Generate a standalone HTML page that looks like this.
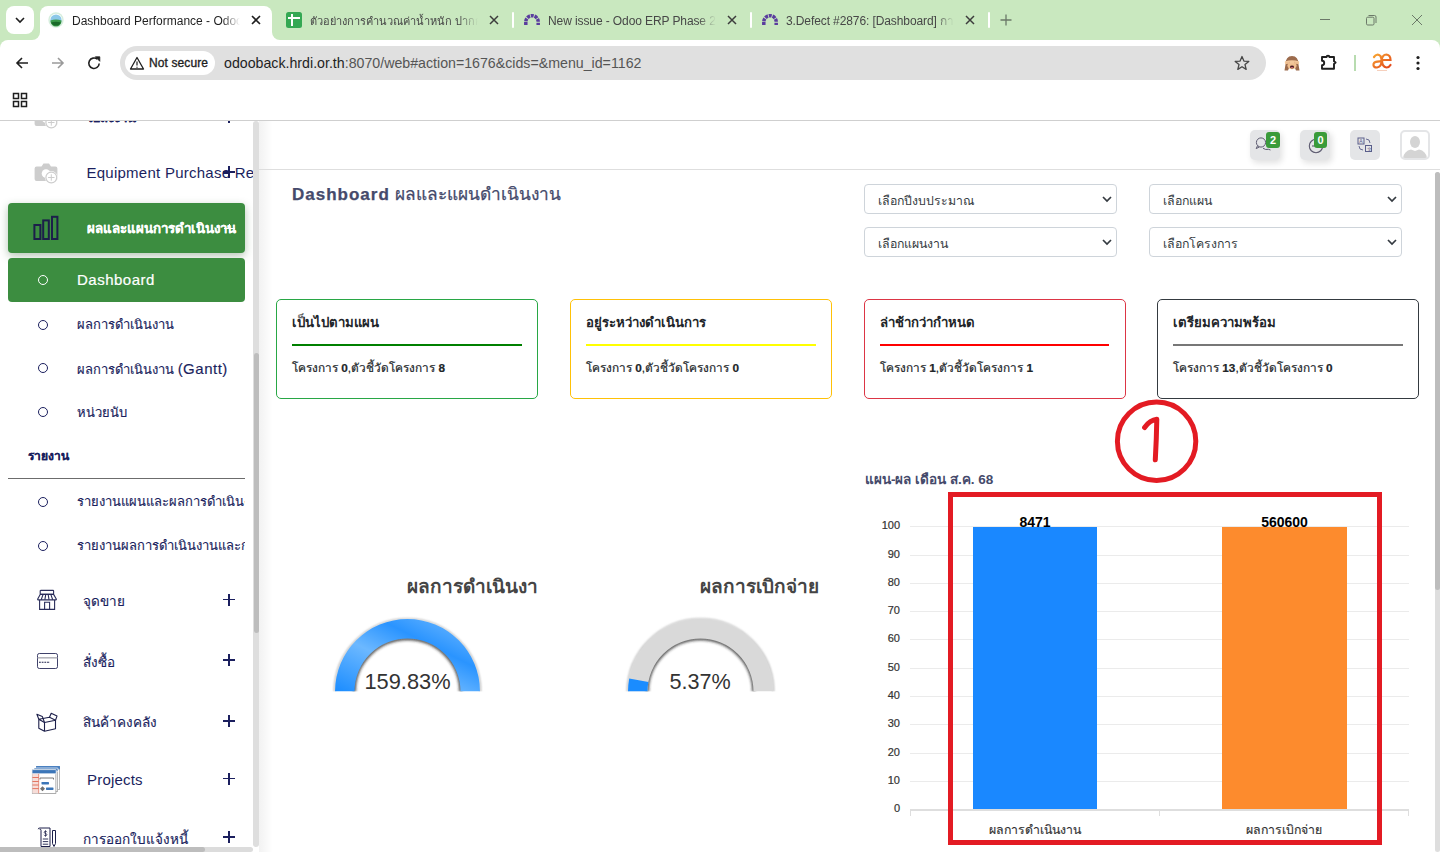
<!DOCTYPE html>
<html><head><meta charset="utf-8">
<style>
*{box-sizing:border-box;margin:0;padding:0}
html,body{width:1440px;height:852px;overflow:hidden;background:#fff;font-family:"Liberation Sans",sans-serif;position:relative}
.a{position:absolute}
.tt{white-space:nowrap}
/* chrome */
#tabs{left:0;top:0;width:1440px;height:50px;background:#c9e8bf}
#toolbar{left:0;top:40px;width:1440px;height:44px;background:#fff;border-radius:8px 8px 0 0}
#bm{left:0;top:84px;width:1440px;height:36px;background:#fff}
#topline{left:0;top:120px;width:1440px;height:1px;background:#cfcfcf}
.tabtitle{white-space:nowrap;font-size:12px;color:#474747;top:13px;height:16px;line-height:16px;overflow:hidden}
.sep{width:2px;height:16px;top:12px;background:#fff;border-radius:1px}
/* sidebar */
.sb-txt{color:#1b1f5e;font-size:15px;white-space:nowrap;-webkit-text-stroke:0.15px #1b1f5e}
.circ{width:10px;height:10px;border:1.3px solid #1b1f5e;border-radius:50%;left:38px}
.plus{left:223px;width:12px;height:12px}
.plus:before{content:"";position:absolute;left:0;top:5.45px;width:12px;height:1.1px;background:#1b1f5e}
.plus:after{content:"";position:absolute;left:5.45px;top:0;width:1.1px;height:12px;background:#1b1f5e}
/* cards */
.card{top:299px;height:100px;width:261.5px;border:1px solid;border-radius:5px}
.card .t{position:absolute;left:15px;top:12px;font-size:13.2px;font-weight:bold;color:#212529;white-space:nowrap}
.card .l{position:absolute;left:15px;top:44px;height:2px}
.card .b{position:absolute;left:15px;top:58px;font-size:11.8px;color:#212529;white-space:nowrap;-webkit-text-stroke:0.2px #212529}
.card .b b{font-weight:bold}
.sel{height:30px;width:253px;border:1px solid #ced4da;border-radius:4px;background:#fff}
.sel span{position:absolute;left:13px;top:6px;font-size:12.3px;color:#343a40;white-space:nowrap}
.sel svg{position:absolute;right:3px;top:8px}
.ylab{font-size:11px;color:#333;text-align:right;width:30px;left:870px;-webkit-text-stroke:0.2px #333}
.grid{left:910px;width:499px;height:1px;background:#ebebeb}
</style></head><body>

<!-- ===== TAB STRIP ===== -->
<div id="tabs" class="a"></div>
<!-- active tab -->
<div class="a" style="left:40px;top:6px;width:232px;height:40px;background:#fff;border-radius:8px 8px 0 0"></div>
<div class="a" style="left:32px;top:30px;width:8px;height:10px;background:#fff"></div>
<div class="a" style="left:24px;top:22px;width:16px;height:18px;background:#c9e8bf;border-radius:0 0 8px 0"></div>
<div class="a" style="left:6px;top:6px;width:28px;height:28px;background:#fff;border-radius:8px"></div>
<svg class="a" style="left:13px;top:13px" width="14" height="14" viewBox="0 0 14 14"><path d="M3 5 L7 9 L11 5" fill="none" stroke="#1f1f1f" stroke-width="1.6"/></svg>

<div class="a" style="left:272px;top:30px;width:10px;height:10px;background:#fff"></div>
<div class="a" style="left:272px;top:22px;width:18px;height:18px;background:#c9e8bf;border-radius:0 0 0 8px"></div>
<svg class="a" style="left:48px;top:12px" width="16" height="16" viewBox="0 0 16 16"><circle cx="8" cy="8" r="7.7" fill="#d6eedd"/><circle cx="8" cy="8" r="6.2" fill="#fff"/><circle cx="8" cy="8" r="5.6" fill="#8cc8e8"/><path d="M2.4 8.6 Q8 6.2 13.6 8.6 L13.6 9 A5.6 5.6 0 0 1 2.4 9Z" fill="#3a9a4a"/><path d="M3 10.5 Q8 9 13 10.5 A5.6 5.6 0 0 1 3 10.5Z" fill="#1a6a2a"/></svg>
<div class="a tabtitle" style="left:72px;width:170px;color:#1f1f1f;-webkit-mask-image:linear-gradient(to right,#000 150px,transparent 168px)">Dashboard Performance - Odoo</div>
<svg class="a" style="left:251px;top:15px" width="10" height="10" viewBox="0 0 10 10"><path d="M1 1L9 9M9 1L1 9" stroke="#1f1f1f" stroke-width="1.6"/></svg>
<!-- tab 2 -->
<div class="a" style="left:286px;top:12px;width:16px;height:16px;background:#34a853;border-radius:2.5px"></div>
<div class="a" style="left:288px;top:17px;width:12px;height:2px;background:#fff"></div>
<div class="a" style="left:291px;top:14px;width:2px;height:12px;background:#fff"></div>
<div class="a tabtitle" style="left:310px;width:168px;font-size:11px;-webkit-mask-image:linear-gradient(to right,#000 150px,transparent 168px)">ตัวอย่างการคำนวณค่าน้ำหนัก ปากกล้า</div>
<svg class="a" style="left:489px;top:15px" width="10" height="10" viewBox="0 0 10 10"><path d="M1 1L9 9M9 1L1 9" stroke="#3c3c3c" stroke-width="1.5"/></svg>
<div class="a sep" style="left:512px"></div>
<!-- tab 3 -->
<svg class="a" style="left:522px;top:12px" width="20" height="16" viewBox="0 0 20 16"><path d="M3.8 13.1V9.9A6.2 6.2 0 0 1 16.2 9.9V13.1" fill="none" stroke="#5a3d9e" stroke-width="3.5" stroke-dasharray="3 0.82"/></svg>
<div class="a tabtitle" style="left:548px;width:168px;letter-spacing:-0.1px;-webkit-mask-image:linear-gradient(to right,#000 150px,transparent 168px)">New issue - Odoo ERP Phase 2</div>
<svg class="a" style="left:727px;top:15px" width="10" height="10" viewBox="0 0 10 10"><path d="M1 1L9 9M9 1L1 9" stroke="#3c3c3c" stroke-width="1.5"/></svg>
<div class="a sep" style="left:750px"></div>
<!-- tab 4 -->
<svg class="a" style="left:760px;top:12px" width="20" height="16" viewBox="0 0 20 16"><path d="M3.8 13.1V9.9A6.2 6.2 0 0 1 16.2 9.9V13.1" fill="none" stroke="#5a3d9e" stroke-width="3.5" stroke-dasharray="3 0.82"/></svg>
<div class="a tabtitle" style="left:786px;width:168px;letter-spacing:-0.1px;-webkit-mask-image:linear-gradient(to right,#000 150px,transparent 168px)">3.Defect #2876: [Dashboard] กา</div>
<svg class="a" style="left:965px;top:15px" width="10" height="10" viewBox="0 0 10 10"><path d="M1 1L9 9M9 1L1 9" stroke="#3c3c3c" stroke-width="1.5"/></svg>
<div class="a sep" style="left:988px"></div>
<svg class="a" style="left:999px;top:13px" width="14" height="14" viewBox="0 0 14 14"><path d="M7 1.5V12.5M1.5 7H12.5" stroke="#6b7868" stroke-width="1.3"/></svg>
<!-- window controls -->
<div class="a" style="left:1320px;top:19px;width:10px;height:1px;background:#6b7868"></div>
<svg class="a" style="left:1364px;top:13px" width="14" height="14" viewBox="0 0 14 14"><rect x="2.5" y="4.2" width="7.5" height="7.8" rx="1.2" fill="none" stroke="#6b7868" stroke-width="1"/><path d="M4.5 2.5H10.5A1.5 1.5 0 0 1 12 4V10" fill="none" stroke="#6b7868" stroke-width="1"/></svg>
<svg class="a" style="left:1411px;top:14px" width="12" height="12" viewBox="0 0 12 12"><path d="M1 1L11 11M11 1L1 11" stroke="#6b7868" stroke-width="1"/></svg>

<!-- ===== TOOLBAR ===== -->
<div id="toolbar" class="a"></div>
<svg class="a" style="left:14px;top:55px" width="16" height="16" viewBox="0 0 16 16"><path d="M14 8H3M8 3L3 8L8 13" fill="none" stroke="#1f1f1f" stroke-width="1.6"/></svg>
<svg class="a" style="left:50px;top:55px" width="16" height="16" viewBox="0 0 16 16"><path d="M2 8H13M8 3L13 8L8 13" fill="none" stroke="#9a9a9a" stroke-width="1.6"/></svg>
<svg class="a" style="left:86px;top:55px" width="16" height="16" viewBox="0 0 16 16"><path d="M13.2 8.5A5.2 5.2 0 1 1 11.3 4.2" fill="none" stroke="#1f1f1f" stroke-width="1.6"/><path d="M9.3 1.8H13.8V6.3Z" fill="#1f1f1f" stroke="#1f1f1f" stroke-width="0.8" stroke-linejoin="round"/></svg>
<div class="a" style="left:120px;top:46px;width:1146px;height:34px;background:#e0e0e0;border-radius:17px"></div>
<div class="a" style="left:125px;top:51px;width:90px;height:24px;background:#fff;border-radius:12px"></div>
<svg class="a" style="left:129px;top:56px" width="16" height="14" viewBox="0 0 16 14"><path d="M8 1.5L14.5 13H1.5Z" fill="none" stroke="#1f1f1f" stroke-width="1.3" stroke-linejoin="round"/><path d="M8 5.5V9.5M8 10.8V11.8" stroke="#1f1f1f" stroke-width="1.2"/></svg>
<div class="a tt" style="left:149px;top:56px;font-size:12px;color:#1f1f1f;-webkit-text-stroke:0.35px #1f1f1f;letter-spacing:0.1px">Not secure</div>
<div class="a tt" style="left:224px;top:55px;font-size:14.2px;color:#1f1f1f">odooback.hrdi.or.th<span style="color:#555">:8070/web#action=1676&amp;cids=&amp;menu_id=1162</span></div>
<svg class="a" style="left:1234px;top:55px" width="16" height="16" viewBox="0 0 16 16"><path d="M8 1.5L9.9 6.1L14.8 6.4L11 9.6L12.2 14.4L8 11.7L3.8 14.4L5 9.6L1.2 6.4L6.1 6.1Z" fill="none" stroke="#474747" stroke-width="1.3" stroke-linejoin="round"/></svg>
<svg class="a" style="left:1284px;top:55px" width="16" height="16" viewBox="0 0 16 16"><path d="M1.5 9.5Q1.5 1 8 1Q14.5 1 14.5 9.5L15.5 15.5H12L11 13H5L4 15.5H0.5Z" fill="#9c6b4c"/><ellipse cx="8" cy="10.6" rx="4.6" ry="3.6" fill="#f0c090"/><path d="M0.8 6.5Q8 4.2 15.2 6.5L15 9.3Q8 7.8 1 9.3Z" fill="#f3c89c"/><path d="M3 7.2V8.8M5.2 6.7V8.4M10.8 6.7V8.4M13 7.2V8.8" stroke="#d9a070" stroke-width="0.6"/><ellipse cx="8" cy="12" rx="2" ry="1.4" fill="#4a1a24"/><ellipse cx="8" cy="12.5" rx="1.1" ry="0.6" fill="#e07080"/></svg>
<svg class="a" style="left:1319px;top:52px" width="20" height="20" viewBox="0 0 20 20"><path d="M3 5H7.6A1.4 1.4 0 0 1 10.4 5H15V9.3L16.6 10.6L15 11.9V16.8H3V13.2A2.2 2.2 0 0 0 3 8.8Z" fill="none" stroke="#1f1f1f" stroke-width="1.9" stroke-linejoin="round"/></svg>
<div class="a" style="left:1354px;top:55px;width:2px;height:16px;background:#b8dcb0"></div>
<svg class="a" style="left:1371px;top:52px" width="22" height="20" viewBox="0 0 22 20"><defs><linearGradient id="ae" x1="0" y1="0" x2="1" y2="1"><stop offset="0" stop-color="#f7a531"/><stop offset="1" stop-color="#e2441a"/></linearGradient></defs><path d="M3 5Q6 1 9.5 4Q11 7 10.5 10Q10 15 6 15.5Q2 15.5 2.5 12Q3.5 9 10.5 9.5M10.5 9.5Q11 2.5 15.5 2.5Q19.5 3 19.5 8H11M11 8Q11 15 15.5 15.5Q18 15.5 19.5 13" fill="none" stroke="url(#ae)" stroke-width="2.2" stroke-linecap="round"/><path d="M6 18.5H16" stroke="#f0b090" stroke-width="0.6"/></svg>
<svg class="a" style="left:1414px;top:55px" width="8" height="16" viewBox="0 0 8 16"><circle cx="4" cy="2.5" r="1.6" fill="#1f1f1f"/><circle cx="4" cy="8" r="1.6" fill="#1f1f1f"/><circle cx="4" cy="13.5" r="1.6" fill="#1f1f1f"/></svg>

<!-- ===== BOOKMARK BAR ===== -->
<div id="bm" class="a"></div>
<svg class="a" style="left:12px;top:92px" width="16" height="16" viewBox="0 0 16 16"><rect x="1.5" y="1.5" width="5" height="5" fill="none" stroke="#1f1f1f" stroke-width="1.5"/><rect x="9.5" y="1.5" width="5" height="5" fill="none" stroke="#1f1f1f" stroke-width="1.5"/><rect x="1.5" y="9.5" width="5" height="5" fill="none" stroke="#1f1f1f" stroke-width="1.5"/><rect x="9.5" y="9.5" width="5" height="5" fill="none" stroke="#1f1f1f" stroke-width="1.5"/></svg>
<div id="topline" class="a"></div>

<!-- ===== SIDEBAR ===== -->
<div id="sidebar" class="a" style="left:0;top:121px;width:253px;height:731px;overflow:hidden;background:#fff">
<div style="position:absolute;left:0;top:-121px;width:253px;height:852px">
<!-- cut item -->
<svg class="a" style="left:34px;top:107px" width="26" height="24" viewBox="0 0 26 24"><path d="M2.6 4.5H7.5L9.5 1.6H15L17 4.5H21.4A2 2 0 0 1 23.4 6.5V16.9A2 2 0 0 1 21.4 18.9H2.6A2 2 0 0 1 0.6 16.9V6.5A2 2 0 0 1 2.6 4.5Z" fill="#cdcdcd"/><circle cx="12" cy="11.5" r="4.3" fill="#fff"/><circle cx="17.3" cy="15.5" r="6.4" fill="#fff"/><circle cx="17.3" cy="15.5" r="5.4" fill="none" stroke="#cdcdcd" stroke-width="1.2"/><path d="M17.3 12.3V18.7M14.1 15.5H20.5" stroke="#cdcdcd" stroke-width="1"/></svg>
<div class="a sb-txt" style="left:86px;top:107.5px;font-size:13.3px;line-height:20px;font-weight:bold">ใบสั่งงาน</div>
<div class="a plus" style="top:110.5px"></div>
<!-- Equipment -->
<svg class="a" style="left:34px;top:162px" width="26" height="24" viewBox="0 0 26 24"><path d="M2.6 4.5H7.5L9.5 1.6H15L17 4.5H21.4A2 2 0 0 1 23.4 6.5V16.9A2 2 0 0 1 21.4 18.9H2.6A2 2 0 0 1 0.6 16.9V6.5A2 2 0 0 1 2.6 4.5Z" fill="#cdcdcd"/><circle cx="12" cy="11.5" r="4.3" fill="#fff"/><circle cx="17.3" cy="15.5" r="6.4" fill="#fff"/><circle cx="17.3" cy="15.5" r="5.4" fill="none" stroke="#cdcdcd" stroke-width="1.2"/><path d="M17.3 12.3V18.7M14.1 15.5H20.5" stroke="#cdcdcd" stroke-width="1"/></svg>
<div class="a sb-txt" style="left:86.5px;top:164px;line-height:18px;letter-spacing:0.25px;-webkit-text-stroke:0">Equipment Purchase Request</div>
<div class="a plus" style="top:166px"></div>
<!-- active parent -->
<div class="a" style="left:8px;top:203px;width:237px;height:50px;background:#3c8d40;border-radius:4px;box-shadow:0 3px 8px rgba(40,90,40,0.35)"></div>
<svg class="a" style="left:32px;top:214px" width="28" height="28" viewBox="0 0 28 28"><rect x="2.4" y="11" width="6" height="14" fill="none" stroke="#1c1f4a" stroke-width="2"/><rect x="11.2" y="6.4" width="5.6" height="18.6" fill="none" stroke="#1c1f4a" stroke-width="2"/><rect x="20" y="2.8" width="5.4" height="22.2" fill="none" stroke="#1c1f4a" stroke-width="2"/></svg>
<div class="a sb-txt" style="left:87px;top:219px;font-size:13.3px;line-height:20px;font-weight:bold;color:#fff;-webkit-text-stroke:0.1px #fff">ผลและแผนการดำเนินงาน</div>
<div class="a" style="left:224px;top:227.5px;width:11px;height:1.2px;background:#fff"></div>
<div class="a" style="left:229px;top:224px;width:1.1px;height:8px;background:#fff"></div>
<!-- Dashboard active -->
<div class="a" style="left:8px;top:258px;width:237px;height:44px;background:#3c8d40;border-radius:4px"></div>
<div class="a circ" style="top:275px;border-color:#fff;border-width:1.9px"></div>
<div class="a sb-txt" style="left:77px;top:270px;line-height:20px;color:#fff;letter-spacing:0.5px;-webkit-text-stroke:0.2px #fff">Dashboard</div>
<!-- sub items -->
<div class="a circ" style="top:319.5px"></div>
<div class="a sb-txt" style="left:77px;top:315px;font-size:13px;line-height:20px">ผลการดำเนินงาน</div>
<div class="a circ" style="top:363px"></div>
<div class="a sb-txt" style="left:77px;top:359px;font-size:13px;line-height:20px">ผลการดำเนินงาน <span style="font-size:15px;letter-spacing:0.5px">(Gantt)</span></div>
<div class="a circ" style="top:407px"></div>
<div class="a sb-txt" style="left:77px;top:403px;font-size:13px;line-height:20px">หน่วยนับ</div>
<div class="a sb-txt" style="left:28px;top:446px;font-size:12px;line-height:20px;font-weight:bold">รายงาน</div>
<div class="a" style="left:8px;top:478px;width:237px;height:1px;background:#6c6c6c"></div>
<div class="a circ" style="top:496.5px"></div>
<div class="a sb-txt" style="left:77px;top:492px;font-size:13px;line-height:20px;width:168px;overflow:hidden">รายงานแผนและผลการดำเนินงาน</div>
<div class="a circ" style="top:540.5px"></div>
<div class="a sb-txt" style="left:77px;top:536px;font-size:13px;line-height:20px;width:168px;overflow:hidden">รายงานผลการดำเนินงานและการเบิกจ่าย</div>
<!-- menu items -->
<svg class="a" style="left:36px;top:589px" width="22" height="22" viewBox="0 0 22 22"><rect x="4.2" y="1.4" width="13.4" height="4" rx="0.6" fill="none" stroke="#2a2d5a" stroke-width="1.1"/><path d="M4.2 5.4H17.6L20.4 10.2Q20.4 10.9 19.6 10.9H2.4Q1.6 10.9 1.6 10.2Z" fill="none" stroke="#2a2d5a" stroke-width="1.1" stroke-linejoin="round"/><path d="M7 5.6L5.2 10.7M9.7 5.6L8.9 10.7M12.2 5.6L13 10.7M14.9 5.6L16.7 10.7" stroke="#2a2d5a" stroke-width="1.1"/><path d="M3.6 11V20.4H18.6V11" fill="none" stroke="#2a2d5a" stroke-width="1.1"/><path d="M8.6 20.4V13.2H13.6V20.4" fill="none" stroke="#2a2d5a" stroke-width="1.1"/></svg>
<div class="a sb-txt" style="left:83px;top:591.5px;font-size:13.5px;line-height:20px">จุดขาย</div>
<div class="a plus" style="top:593.5px"></div>
<svg class="a" style="left:36px;top:652px" width="22" height="17" viewBox="0 0 22 17"><rect x="1.5" y="1.5" width="20" height="15" rx="1.8" fill="none" stroke="#2a2d5a" stroke-width="0.9"/><path d="M1.5 5.8H21.5" stroke="#b0b0b8" stroke-width="1.5"/><path d="M3 10.2H14" stroke="#1c1f4a" stroke-width="1.1" stroke-dasharray="1.8 0.9"/></svg>
<div class="a sb-txt" style="left:83px;top:652.5px;font-size:13.5px;line-height:20px">สั่งซื้อ</div>
<div class="a plus" style="top:654px"></div>
<svg class="a" style="left:36px;top:712px" width="22" height="21" viewBox="0 0 22 21"><path d="M2.8 7.2L8.5 10.5V19.3L2.8 16.3Z M8.5 10.5L19.5 8.3V16.8L8.5 19.3 M2.8 7.2L13.5 5.3L19.5 8.3" fill="none" stroke="#1c1f4a" stroke-width="1.1" stroke-linejoin="round"/><path d="M2.8 7.2L0.9 2.3L6.3 4.4L8.5 10.5 M13.5 5.3L15.2 1.2L21 4.1L19.5 8.3" fill="none" stroke="#1c1f4a" stroke-width="1.1" stroke-linejoin="round"/></svg>
<div class="a sb-txt" style="left:83px;top:713px;font-size:13.5px;line-height:20px">สินค้าคงคลัง</div>
<div class="a plus" style="top:715px"></div>
<svg class="a" style="left:30px;top:764px" width="32" height="32" viewBox="0 0 32 32">
<rect x="6.3" y="2.3" width="23.4" height="23.2" fill="#fff" stroke="#8a8a8a" stroke-width="0.6"/><rect x="6" y="2" width="24" height="3.6" rx="0.8" fill="#4a80c0"/>
<rect x="4.3" y="4.3" width="23.4" height="23.3" fill="#fff" stroke="#8a8a8a" stroke-width="0.6"/><rect x="4" y="4" width="24" height="3.6" rx="0.8" fill="#4a80c0" stroke="#fff" stroke-width="0.7"/>
<rect x="2.3" y="5.9" width="23.6" height="23.6" fill="#fff" stroke="#8a8a8a" stroke-width="0.7"/><rect x="2" y="5.6" width="24.2" height="4.2" rx="0.8" fill="#3c76b8" stroke="#fff" stroke-width="0.7"/>
<rect x="2.4" y="9.8" width="6.4" height="19.6" fill="#f7ddd8"/><path d="M8.7 9.8V29.4" stroke="#e07a66" stroke-width="0.8"/>
<path d="M2.4 13.5H8.7M2.4 17.5H8.7M2.4 21H8.7M2.4 24.6H8.7" stroke="#e06a55" stroke-width="0.9"/>
<path d="M10 15.5V14H23.5V15.5" fill="none" stroke="#777" stroke-width="1"/>
<rect x="11.5" y="18" width="7.5" height="2.4" rx="0.6" fill="#3c76b8"/>
<path d="M12.5 22.3L15 24.8L12.5 27.3L10 24.8Z" fill="#707070"/>
<rect x="16" y="23.5" width="7.5" height="2.4" rx="0.6" fill="#3c76b8"/>
</svg>
<div class="a sb-txt" style="left:87px;top:770px;line-height:20px;letter-spacing:0.2px;-webkit-text-stroke:0">Projects</div>
<div class="a plus" style="top:772.5px"></div>
<svg class="a" style="left:37px;top:827px" width="22" height="21" viewBox="0 0 22 21"><path d="M1.2 2.2Q1.2 1 2.8 1H13V19.5H4V3.2Q4 2 2.6 2.2" fill="none" stroke="#1c1f4a" stroke-width="1"/><path d="M5.8 12H11.2M5.8 14.6H11.2M5.8 17.2H11.2" stroke="#1c1f4a" stroke-width="0.9"/><path d="M10 5.2Q9.6 4.3 8.5 4.3Q7.2 4.3 7.2 5.3Q7.2 6.3 8.5 6.5Q9.9 6.7 9.9 7.7Q9.9 8.7 8.5 8.7Q7.3 8.7 7 7.8M8.5 3.3V9.7" fill="none" stroke="#1c1f4a" stroke-width="0.75"/><path d="M15.5 3.5H18.5V16.5L17 19.5L15.5 16.5Z" fill="none" stroke="#1c1f4a" stroke-width="1"/></svg>
<div class="a sb-txt" style="left:83px;top:829.5px;font-size:13.5px;line-height:20px">การออกใบแจ้งหนี้</div>
<div class="a plus" style="top:831px"></div>
</div>
</div>
<!-- sidebar scrollbars -->
<div class="a" style="left:253px;top:121px;width:6px;height:726px;background:#dedede;border-radius:3px"></div>
<div class="a" style="left:253.5px;top:353px;width:5px;height:280px;background:#bdbdbd;border-radius:3px"></div>
<div class="a" style="left:0;top:847px;width:253px;height:5px;background:#dcdcdc;border-radius:0 3px 3px 0"></div>
<div class="a" style="left:0;top:847px;width:205px;height:5px;background:#bdbdbd;border-radius:0 3px 3px 0"></div>
<div class="a" style="left:259px;top:121px;width:14px;height:731px;background:linear-gradient(to right,rgba(0,0,0,0.05),rgba(0,0,0,0))"></div>


<!-- ===== MAIN ===== -->
<div id="main">
<!-- top bar -->
<div class="a" style="left:259px;top:169px;width:1181px;height:1px;background:#dedede"></div>
<div class="a" style="left:1250px;top:130px;width:30px;height:30px;background:#e4e5e7;border-radius:5px;box-shadow:2px 3px 6px rgba(0,0,0,0.12)"></div>
<svg class="a" style="left:1254px;top:136px" width="18" height="16" viewBox="0 0 18 16"><circle cx="7" cy="6.5" r="4.6" fill="none" stroke="#5c5a70" stroke-width="1"/><path d="M3.6 9.6L2.2 12.6L5.3 11" fill="none" stroke="#5c5a70" stroke-width="1"/><path d="M9 12.2Q11.5 14.2 14.5 13.3L16.5 14" fill="none" stroke="#5c5a70" stroke-width="1"/></svg>
<div class="a" style="left:1266px;top:132px;width:14px;height:16px;background:#3a9b3a;border-radius:3px;color:#fff;font-size:11px;font-weight:bold;text-align:center;line-height:16px">2</div>
<div class="a" style="left:1300px;top:130px;width:30px;height:30px;background:#e4e5e7;border-radius:5px;box-shadow:2px 3px 6px rgba(0,0,0,0.12)"></div>
<svg class="a" style="left:1307px;top:138px" width="18" height="16" viewBox="0 0 18 16"><circle cx="9" cy="8" r="6.7" fill="none" stroke="#5c5a70" stroke-width="1.1"/><path d="M9 8H5" stroke="#5c5a70" stroke-width="1.1"/></svg>
<div class="a" style="left:1314px;top:132px;width:13px;height:16px;background:#3a9b3a;border-radius:3px;color:#fff;font-size:11px;font-weight:bold;text-align:center;line-height:16px">0</div>
<div class="a" style="left:1350px;top:130px;width:30px;height:30px;background:#e4e5e7;border-radius:5px"></div>
<svg class="a" style="left:1357px;top:137px" width="16" height="16" viewBox="0 0 16 16"><rect x="1" y="1" width="6" height="6" fill="none" stroke="#5a5e8a" stroke-width="1"/><rect x="8.5" y="8.5" width="6" height="6" fill="none" stroke="#5a5e8a" stroke-width="1"/><path d="M9 2Q13 2 13 6M2 9Q2 13 6 13" fill="none" stroke="#5a5e8a" stroke-width="0.9"/><text x="2.2" y="6" font-size="5" fill="#5a5e8a" font-family="Liberation Sans">A</text><text x="9.7" y="13.5" font-size="5" fill="#5a5e8a" font-family="Liberation Sans">文</text></svg>
<div class="a" style="left:1400px;top:130px;width:30px;height:30px;border:2px solid #e4e5e7;border-radius:5px;overflow:hidden;background:#fff">
<svg style="position:absolute;left:0;top:0" width="26" height="26" viewBox="0 0 26 26"><ellipse cx="13" cy="10" rx="5" ry="6" fill="#d4d4d4"/><path d="M1 26Q2 19 9 17.5L13 19L17 17.5Q24 19 25 26Z" fill="#d4d4d4"/></svg></div>
<!-- title -->
<div class="a tt" style="left:292px;top:183px;line-height:22px;font-size:17px;color:#454a6b;-webkit-text-stroke:0.25px #454a6b"><b style="letter-spacing:1px">Dashboard</b> <span style="font-size:17.3px">ผลและแผนดำเนินงาน</span></div>
<!-- selects -->
<div class="a sel" style="left:864px;top:184px"><span>เลือกปีงบประมาณ</span><svg width="12" height="12" viewBox="0 0 12 12"><path d="M2 4L6 8L10 4" fill="none" stroke="#343a40" stroke-width="1.7"/></svg></div>
<div class="a sel" style="left:1149px;top:184px"><span>เลือกแผน</span><svg width="12" height="12" viewBox="0 0 12 12"><path d="M2 4L6 8L10 4" fill="none" stroke="#343a40" stroke-width="1.7"/></svg></div>
<div class="a sel" style="left:864px;top:227px"><span>เลือกแผนงาน</span><svg width="12" height="12" viewBox="0 0 12 12"><path d="M2 4L6 8L10 4" fill="none" stroke="#343a40" stroke-width="1.7"/></svg></div>
<div class="a sel" style="left:1149px;top:227px"><span>เลือกโครงการ</span><svg width="12" height="12" viewBox="0 0 12 12"><path d="M2 4L6 8L10 4" fill="none" stroke="#343a40" stroke-width="1.7"/></svg></div>
<!-- cards -->
<div class="a card" style="left:276px;border-color:#28a745"><div class="t">เป็นไปตามแผน</div><div class="l" style="width:230px;background:#008000"></div><div class="b">โครงการ <b>0</b>,ตัวชี้วัดโครงการ <b>8</b></div></div>
<div class="a card" style="left:570px;border-color:#ffc107"><div class="t">อยู่ระหว่างดำเนินการ</div><div class="l" style="width:230px;background:#ffff00"></div><div class="b">โครงการ <b>0</b>,ตัวชี้วัดโครงการ <b>0</b></div></div>
<div class="a card" style="left:864px;border-color:#dc3545"><div class="t">ล่าช้ากว่ากำหนด</div><div class="l" style="width:229px;background:#ff0000"></div><div class="b">โครงการ <b>1</b>,ตัวชี้วัดโครงการ <b>1</b></div></div>
<div class="a card" style="left:1157px;border-color:#343a40"><div class="t">เตรียมความพร้อม</div><div class="l" style="width:230px;background:#777"></div><div class="b">โครงการ <b>13</b>,ตัวชี้วัดโครงการ <b>0</b></div></div>
<!-- gauges -->
<div class="a tt" style="left:407px;top:576px;width:131px;overflow:hidden;font-size:19px;line-height:22px;font-weight:bold;color:#454545">ผลการดำเนินงาน</div>
<svg class="a" style="left:327px;top:612px" width="162" height="82" viewBox="0 0 162 82">
<defs>
<linearGradient id="g1" x1="0" y1="1" x2="1" y2="0"><stop offset="0" stop-color="#1a8cff"/><stop offset="0.4" stop-color="#6cb8ff"/><stop offset="0.65" stop-color="#2a94ff"/><stop offset="1" stop-color="#7cc0ff"/></linearGradient>
<filter id="ish" x="-20%" y="-20%" width="140%" height="140%"><feGaussianBlur stdDeviation="1.4"/></filter><filter id="ish2" x="-20%" y="-20%" width="140%" height="140%"><feGaussianBlur stdDeviation="0.8"/></filter>
<clipPath id="c1"><rect x="0" y="0" width="162" height="79.5"/></clipPath>
</defs>
<g clip-path="url(#c1)">
<path d="M27.2 80A53.3 53.3 0 0 1 133.8 80" fill="none" stroke="#222" stroke-width="2.6" filter="url(#ish)"/>
<path d="M7.5 80A73 73 0 0 1 153.5 80" fill="none" stroke="#999" stroke-width="1.2" filter="url(#ish2)"/>
<path d="M8 79.5A72.5 72.5 0 0 1 153 79.5H133.5A53 53 0 0 0 27.5 79.5Z" fill="url(#g1)"/>
</g>
</svg>
<div class="a tt" style="left:364.5px;top:668.5px;font-size:21.8px;line-height:26px;color:#333">159.83%</div>
<div class="a tt" style="left:700px;top:576px;font-size:19px;line-height:22px;font-weight:bold;color:#454545">ผลการเบิกจ่าย</div>
<svg class="a" style="left:620px;top:612px" width="162" height="82" viewBox="0 0 162 82">
<g clip-path="url(#c1)">
<path d="M27.2 80A53.3 53.3 0 0 1 133.8 80" fill="none" stroke="#222" stroke-width="2.6" filter="url(#ish)"/>
<path d="M7.5 80A73 73 0 0 1 153.5 80" fill="none" stroke="#999" stroke-width="1.2" filter="url(#ish2)"/>
<path d="M8 79.5A72.5 72.5 0 0 1 153 79.5H133.5A53 53 0 0 0 27.5 79.5Z" fill="#d9d9d9"/>
<path d="M8 79.5A72.5 72.5 0 0 1 9.2 66.6L28.4 69.9A53 53 0 0 0 27.5 79.5Z" fill="#1a8cff"/>
</g>
</svg>
<div class="a tt" style="left:669.5px;top:668.5px;font-size:21.6px;line-height:26px;color:#333">5.37%</div>
<!-- chart -->
<div class="a tt" style="left:865px;top:470px;font-size:13.5px;line-height:20px;font-weight:bold;color:#454a6b">แผน-ผล เดือน ส.ค. 68</div>
<div class="a grid" style="top:526.2px"></div><div class="a ylab" style="top:518.2px;line-height:14px">100</div>
<div class="a grid" style="top:554.5px"></div><div class="a ylab" style="top:546.5px;line-height:14px">90</div>
<div class="a grid" style="top:582.8px"></div><div class="a ylab" style="top:574.8px;line-height:14px">80</div>
<div class="a grid" style="top:611.1px"></div><div class="a ylab" style="top:603.1px;line-height:14px">70</div>
<div class="a grid" style="top:639.4px"></div><div class="a ylab" style="top:631.4px;line-height:14px">60</div>
<div class="a grid" style="top:667.7px"></div><div class="a ylab" style="top:659.7px;line-height:14px">50</div>
<div class="a grid" style="top:696.0px"></div><div class="a ylab" style="top:688.0px;line-height:14px">40</div>
<div class="a grid" style="top:724.3px"></div><div class="a ylab" style="top:716.3px;line-height:14px">30</div>
<div class="a grid" style="top:752.6px"></div><div class="a ylab" style="top:744.6px;line-height:14px">20</div>
<div class="a grid" style="top:780.9px"></div><div class="a ylab" style="top:772.9px;line-height:14px">10</div>
<div class="a grid" style="top:809.2px"></div><div class="a ylab" style="top:801.2px;line-height:14px">0</div>
<div class="a" style="left:910px;top:809px;width:499px;height:2px;background:#dedede"></div>
<div class="a" style="left:910px;top:809px;width:1px;height:7px;background:#dedede"></div>
<div class="a" style="left:1159px;top:809px;width:1px;height:7px;background:#dedede"></div>
<div class="a" style="left:1408px;top:809px;width:1px;height:7px;background:#dedede"></div>
<div class="a" style="left:973px;top:526.7px;width:124px;height:282px;background:#1a88ff"></div>
<div class="a" style="left:1222px;top:526.7px;width:125px;height:282px;background:#fd8b2d"></div>
<div class="a tt" style="left:973px;width:124px;text-align:center;top:514px;font-size:14px;line-height:16px;font-weight:bold;color:#000">8471</div>
<div class="a tt" style="left:1222px;width:125px;text-align:center;top:514px;font-size:14px;line-height:16px;font-weight:bold;color:#000">560600</div>
<div class="a tt" style="left:935px;width:200px;text-align:center;top:820px;font-size:12.3px;line-height:20px;color:#333;-webkit-text-stroke:0.15px #333">ผลการดำเนินงาน</div>
<div class="a tt" style="left:1184px;width:200px;text-align:center;top:820px;font-size:12.3px;line-height:20px;color:#333;-webkit-text-stroke:0.15px #333">ผลการเบิกจ่าย</div>
<!-- annotations -->
<div class="a" style="left:948px;top:492px;width:434px;height:353px;border:5px solid #e31b23"></div>
<svg class="a" style="left:1110px;top:394px" width="94" height="94" viewBox="0 0 94 94"><circle cx="46.6" cy="47.3" r="39.2" fill="none" stroke="#e31b23" stroke-width="5"/><path d="M34.6 33.5Q40 26 46.8 25.3Q46.5 45 45.3 65.8" fill="none" stroke="#e31b23" stroke-width="5" stroke-linecap="round" stroke-linejoin="round"/></svg>
<!-- main scrollbar -->
<div class="a" style="left:1435px;top:172px;width:5px;height:680px;background:#dedede;border-radius:3px"></div>
<div class="a" style="left:1435px;top:172px;width:5px;height:418px;background:#bdbdbd;border-radius:3px"></div>
</div>


</body></html>
